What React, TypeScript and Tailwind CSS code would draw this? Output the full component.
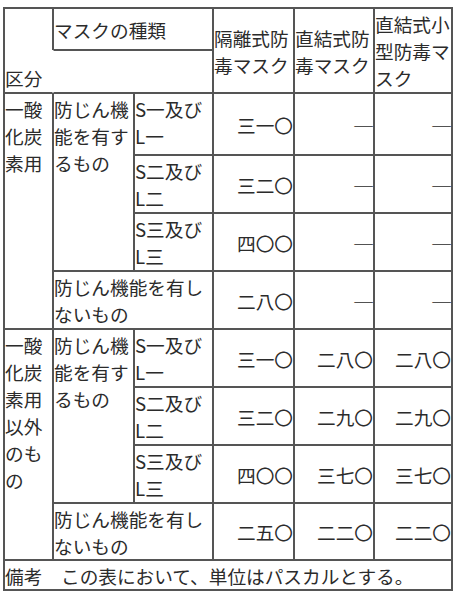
import React from "react";

type CellProps = {
  className?: string;
  children?: React.ReactNode;
};

function Cell({ className = "", children }: CellProps) {
  return (
    <div className={`border border-[#555] px-0 py-px flex flex-col ${className}`}>
      {children !== undefined ? <div className="w-full">{children}</div> : null}
    </div>
  );
}

function Val({ r, c, v }: { r: string; c: string; v: string }) {
  return <Cell className={`${r} ${c} justify-center text-right`}>{v}</Cell>;
}

function Dash({ r, c }: { r: string; c: string }) {
  return <Cell className={`${r} ${c} justify-center text-right`}>{"\u2500"}</Cell>;
}

export default function App() {
  return (
    <div className="pl-[3px] pt-[7px] bg-white font-['Noto_Sans_CJK_JP','Noto_Sans',sans-serif] text-[14pt] leading-[27px] text-[#2b2b2b]">
      <div className="grid w-[450px] grid-cols-[49px_81px_79px_81px_80px_78px] grid-rows-[42px_43px_62px_58px_58px_58px_58px_58px_58px_57px_30px] border border-[#555]">
        {/* header */}
        <Cell className="col-start-1 row-start-1 row-span-2 justify-end border-r-transparent">区分</Cell>
        <Cell className="col-start-2 col-span-2 row-start-1 justify-center shadow-[-1px_0_0_#555]">マスクの種類</Cell>
        <Cell className="col-start-2 col-span-2 row-start-2 border-l-transparent" />
        <Cell className="col-start-4 row-start-1 row-span-2 justify-center">隔離式防毒マスク</Cell>
        <Cell className="col-start-5 row-start-1 row-span-2 justify-center">直結式防毒マスク</Cell>
        <Cell className="col-start-6 row-start-1 row-span-2 justify-center">直結式小型防毒マスク</Cell>

        {/* group 1 */}
        <Cell className="col-start-1 row-start-3 row-span-4 justify-start">一酸化炭素用</Cell>
        <Cell className="col-start-2 row-start-3 row-span-3 justify-start">防じん機能を有するもの</Cell>

        <Cell className="col-start-3 row-start-3 justify-start">S一及び<br />L一</Cell>
        <Val r="row-start-3" c="col-start-4" v="三一〇" />
        <Dash r="row-start-3" c="col-start-5" />
        <Dash r="row-start-3" c="col-start-6" />

        <Cell className="col-start-3 row-start-4 justify-start">S二及び<br />L二</Cell>
        <Val r="row-start-4" c="col-start-4" v="三二〇" />
        <Dash r="row-start-4" c="col-start-5" />
        <Dash r="row-start-4" c="col-start-6" />

        <Cell className="col-start-3 row-start-5 justify-start">S三及び<br />L三</Cell>
        <Val r="row-start-5" c="col-start-4" v="四〇〇" />
        <Dash r="row-start-5" c="col-start-5" />
        <Dash r="row-start-5" c="col-start-6" />

        <Cell className="col-start-2 col-span-2 row-start-6 justify-start">防じん機能を有しないもの</Cell>
        <Val r="row-start-6" c="col-start-4" v="二八〇" />
        <Dash r="row-start-6" c="col-start-5" />
        <Dash r="row-start-6" c="col-start-6" />

        {/* group 2 */}
        <Cell className="col-start-1 row-start-7 row-span-4 justify-start">一酸化炭素用以外のもの</Cell>
        <Cell className="col-start-2 row-start-7 row-span-3 justify-start">防じん機能を有するもの</Cell>

        <Cell className="col-start-3 row-start-7 justify-start">S一及び<br />L一</Cell>
        <Val r="row-start-7" c="col-start-4" v="三一〇" />
        <Val r="row-start-7" c="col-start-5" v="二八〇" />
        <Val r="row-start-7" c="col-start-6" v="二八〇" />

        <Cell className="col-start-3 row-start-8 justify-start">S二及び<br />L二</Cell>
        <Val r="row-start-8" c="col-start-4" v="三二〇" />
        <Val r="row-start-8" c="col-start-5" v="二九〇" />
        <Val r="row-start-8" c="col-start-6" v="二九〇" />

        <Cell className="col-start-3 row-start-9 justify-start">S三及び<br />L三</Cell>
        <Val r="row-start-9" c="col-start-4" v="四〇〇" />
        <Val r="row-start-9" c="col-start-5" v="三七〇" />
        <Val r="row-start-9" c="col-start-6" v="三七〇" />

        <Cell className="col-start-2 col-span-2 row-start-10 justify-start">防じん機能を有しないもの</Cell>
        <Val r="row-start-10" c="col-start-4" v="二五〇" />
        <Val r="row-start-10" c="col-start-5" v="二二〇" />
        <Val r="row-start-10" c="col-start-6" v="二二〇" />

        {/* note */}
        <Cell className="col-start-1 col-span-6 row-start-11 justify-center">備考　この表において、単位はパスカルとする。</Cell>
      </div>
    </div>
  );
}
